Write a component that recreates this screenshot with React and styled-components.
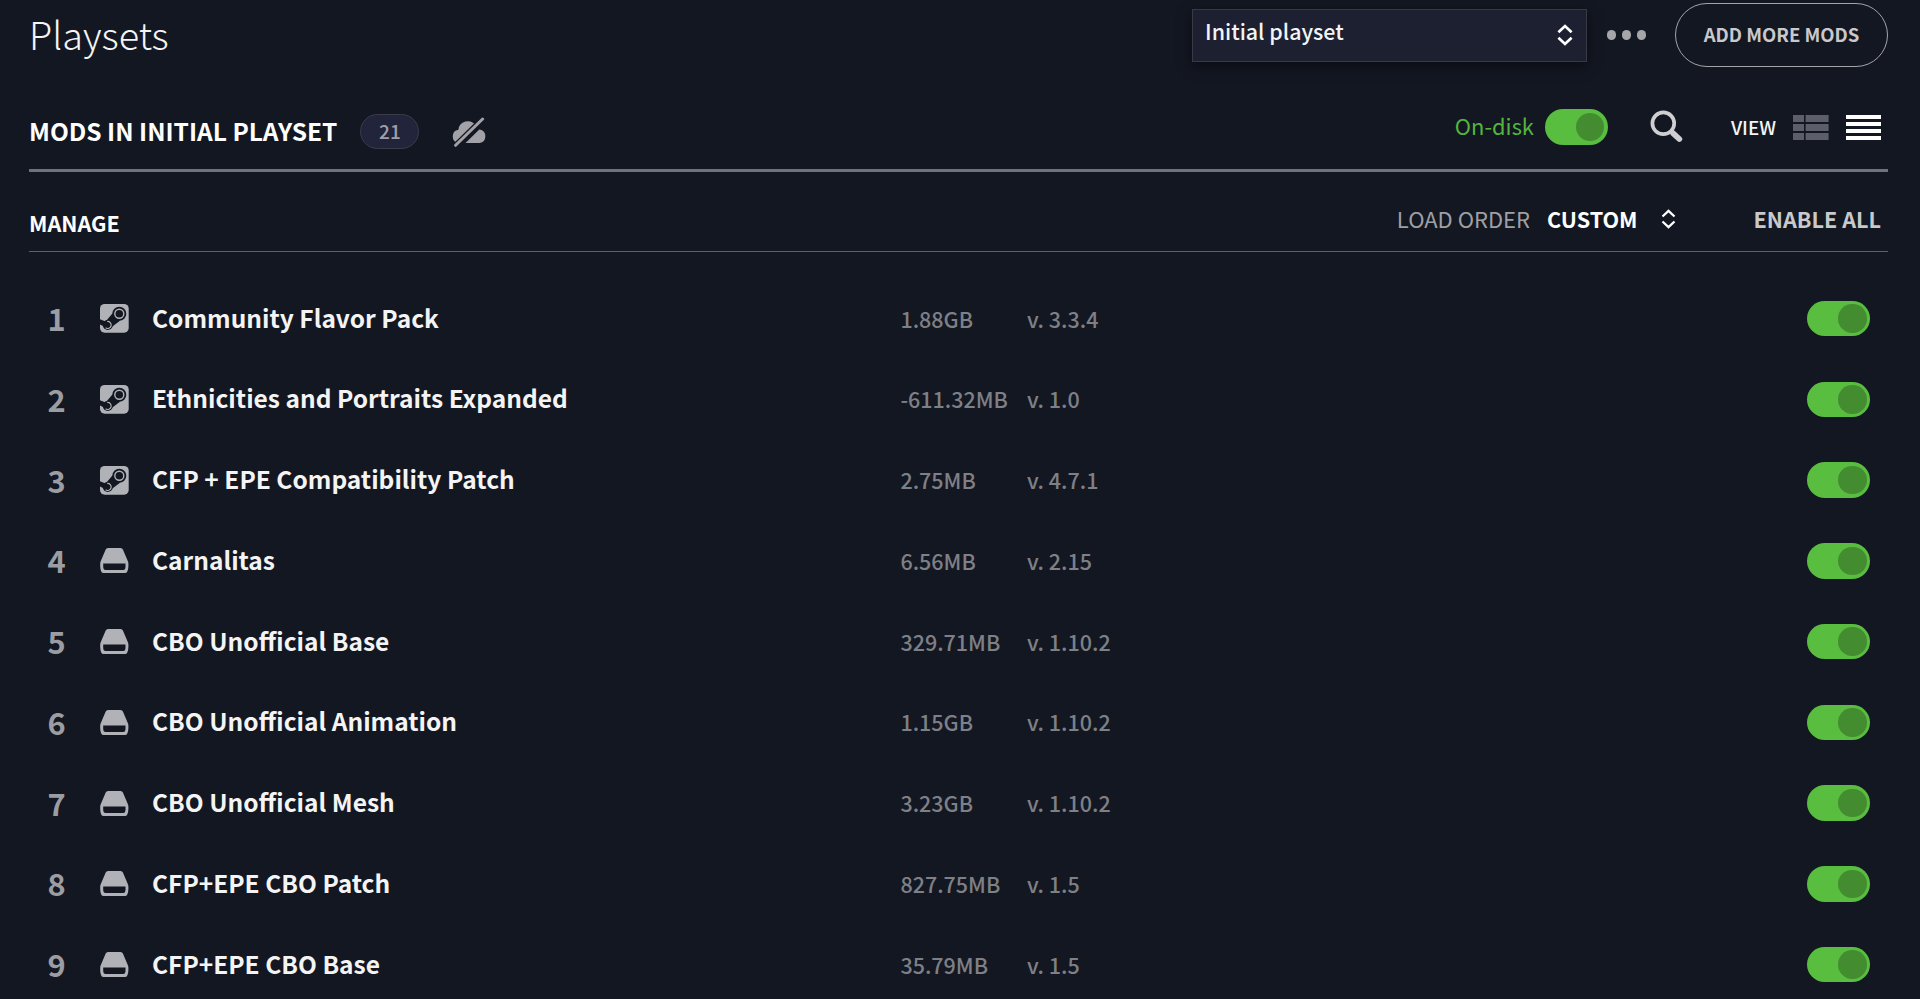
import React, { useState } from 'react'
import styled, { createGlobalStyle } from 'styled-components'

const GlobalStyle = createGlobalStyle`
  * {
    box-sizing: border-box;
  }

  body {
    margin: 0;
    background-color: #131722;
    font-family: "Noto Sans CJK SC", "Noto Sans", sans-serif;
    overflow: hidden;
  }

  button {
    font-family: inherit;
    background: none;
    border: 0;
    padding: 0;
    cursor: pointer;
  }
`

const Page = styled.main`
  display: flex;
  flex-direction: column;
  width: 100%;
  height: 999px;
  padding: 3px 32px 0 29px;
  overflow: hidden;
  white-space: nowrap;
`

const Header = styled.header`
  display: flex;
  align-items: center;
  justify-content: space-between;
  flex-shrink: 0;
  height: 64px;
`

const Title = styled.h1`
  margin: 0;
  padding-bottom: 3px;
  color: #f4f4f5;
  font-size: 37.9px;
  font-weight: 300;
  line-height: 56px;
`

const HeaderActions = styled.div`
  display: flex;
  align-items: center;
`

const PlaysetSelect = styled.button`
  display: flex;
  align-items: center;
  justify-content: space-between;
  width: 395px;
  height: 53px;
  padding: 0 13px 0 12px;
  background-color: #1d2031;
  border: 1px solid #363946;
  box-shadow: 0 4px 12px rgba(0, 0, 0, 0.5);
  color: #f4f4f5;
  font-size: 21.4px;
  font-weight: 500;
`

const SelectText = styled.span`
  padding-bottom: 9px;
`

const MoreBtn = styled.button`
  display: flex;
  gap: 5.4px;
  margin: 0 29px 0 20px;
`

const Dot = styled.span`
  width: 9.4px;
  height: 9.4px;
  border-radius: 50%;
  background-color: #a6a6aa;
`

const AddBtn = styled.button`
  width: 213px;
  height: 64px;
  padding-bottom: 3px;
  border: 1px solid #a3a4a9;
  border-radius: 32px;
  color: #c9c9cb;
  font-size: 18.55px;
  font-weight: 700;
`

const SubHeader = styled.section`
  display: flex;
  justify-content: space-between;
  flex-shrink: 0;
  height: 105px;
  padding-top: 30px;
  border-bottom: 3px solid #70727b;
`

const SubHeaderLeft = styled.div`
  display: flex;
  align-items: center;
  height: 69px;
`

const SubHeaderRight = styled.div`
  display: flex;
  align-items: center;
  height: 60px;
  padding-right: 7px;
`

const SectionTitle = styled.h2`
  margin: 0;
  padding-bottom: 2px;
  color: #fff;
  font-size: 24.5px;
  font-weight: 700;
`

const Badge = styled.span`
  display: flex;
  align-items: center;
  justify-content: center;
  width: 59px;
  height: 35px;
  margin: 0 32px 0 23px;
  padding-bottom: 2px;
  background-color: #21243a;
  border: 1px solid #3a3c49;
  border-radius: 18px;
  color: #9fa0a6;
  font-size: 19px;
  font-weight: 500;
`

const OnDisk = styled.span`
  margin-right: 11px;
  padding-bottom: 4px;
  color: #54b53d;
  font-size: 21.9px;
`

const Switch = styled.button`
  display: flex;
  align-items: center;
  justify-content: ${({ $on }) => ($on ? 'flex-end' : 'flex-start')};
  width: 63px;
  height: 35.5px;
  padding: 0 3.5px;
  border-radius: 18px;
  background-color: ${({ $on }) => ($on ? '#59bd40' : '#3a3c49')};
`

const Knob = styled.span`
  width: 28.5px;
  height: 28.5px;
  border-radius: 50%;
  background-color: rgba(42, 88, 30, 0.47);
`

const SearchBtn = styled.button`
  display: flex;
  margin: 0 48px 2px 42px;
`

const ViewText = styled.span`
  margin-right: 17px;
  padding-bottom: 2px;
  color: #f4f4f5;
  font-size: 18.8px;
  font-weight: 500;
`

const ViewBtn = styled.button`
  display: flex;
  margin-left: ${({ $gap }) => $gap || 0};
  color: ${({ $active }) => ($active ? '#fff' : '#5c5f68')};
`

const ManageBar = styled.section`
  display: flex;
  justify-content: space-between;
  flex-shrink: 0;
  height: 80px;
  padding-top: 16px;
  border-bottom: 1px solid #5f616a;
`

const ManageText = styled.span`
  color: #fff;
  font-size: 21.6px;
  font-weight: 700;
  line-height: 70px;
`

const ManageRight = styled.div`
  display: flex;
  align-items: center;
  height: 61px;
  padding-right: 7px;
`

const OrderText = styled.span`
  padding-bottom: 1px;
  color: #9fa0a4;
  font-size: 22px;
`

const OrderBtn = styled.button`
  display: flex;
  align-items: center;
  gap: 23px;
  margin: 0 78px 0 17px;
  color: #fff;
  font-size: 21.6px;
  font-weight: 700;
`

const EnableBtn = styled.button`
  color: #c9c9cb;
  font-size: 21.6px;
  font-weight: 700;
`

const ModList = styled.ul`
  flex-shrink: 0;
  margin: 0;
  padding: 26.3px 0 0;
  list-style: none;
`

const ModRow = styled.li`
  display: grid;
  grid-template-columns: 52px 52.5px 748.4px 126.5px 1fr auto;
  align-items: center;
  height: 80.75px;
  padding: 0 18px 0 18.5px;
`

const ModNumber = styled.span`
  padding-bottom: 2px;
  color: #9c9da3;
  font-size: 30.8px;
  font-weight: 700;
`

const ModIcon = styled.span`
  display: flex;
  color: #b1b2b8;
`

const ModName = styled.span`
  padding-bottom: 3px;
  color: #f4f4f5;
  font-size: 24.5px;
  font-weight: 700;
`

const ModInfo = styled.span`
  padding-bottom: 1px;
  color: #7e8086;
  font-size: 21.5px;
  font-weight: 500;
`

const mods = [
  { name: 'Community Flavor Pack', size: '1.88GB', version: '3.3.4', source: 'steam' },
  { name: 'Ethnicities and Portraits Expanded', size: '-611.32MB', version: '1.0', source: 'steam' },
  { name: 'CFP + EPE Compatibility Patch', size: '2.75MB', version: '4.7.1', source: 'steam' },
  { name: 'Carnalitas', size: '6.56MB', version: '2.15', source: 'local' },
  { name: 'CBO Unofficial Base', size: '329.71MB', version: '1.10.2', source: 'local' },
  { name: 'CBO Unofficial Animation', size: '1.15GB', version: '1.10.2', source: 'local' },
  { name: 'CBO Unofficial Mesh', size: '3.23GB', version: '1.10.2', source: 'local' },
  { name: 'CFP+EPE CBO Patch', size: '827.75MB', version: '1.5', source: 'local' },
  { name: 'CFP+EPE CBO Base', size: '35.79MB', version: '1.5', source: 'local' },
]

const SortIcon = ({ width, height, stroke }) => (
  <svg width={width} height={height} viewBox="0 0 16 22" fill="none" stroke="#fff" strokeWidth={stroke}>
    <path d="M1.4 8.2 L8 2 L14.6 8.2" />
    <path d="M1.4 13.8 L8 20 L14.6 13.8" />
  </svg>
)

const CloudOffIcon = () => (
  <svg width="36" height="30" viewBox="0 0 36 30">
    <mask id="cloud-cut">
      <rect width="36" height="30" fill="#fff" />
      <path d="M1 33.6 L37 -1.6" stroke="#000" strokeWidth="8" />
    </mask>
    <path
      d="M7.2 26 A6.7 6.7 0 0 1 7.4 12.8 A9.4 9.4 0 0 1 24.4 8.2 A6 6 0 0 1 28.6 12.4 A6.9 6.9 0 0 1 28.6 26 Z"
      fill="#a1a1a7"
      mask="url(#cloud-cut)"
    />
    <path d="M4.6 28.3 L31.6 2" stroke="#a1a1a7" strokeWidth="3" strokeLinecap="round" />
  </svg>
)

const SearchIcon = () => (
  <svg width="33" height="33" viewBox="0 0 33 33" fill="none" stroke="#cfcfd2">
    <circle cx="13.3" cy="13.3" r="10.9" strokeWidth="3.7" />
    <path d="M21 21.3 L23.5 23.5" strokeWidth="4.4" />
    <path d="M23.2 23.3 L29.3 29" strokeWidth="5.8" strokeLinecap="round" />
  </svg>
)

const GridIcon = () => (
  <svg width="36" height="25" viewBox="0 0 36 25" fill="currentColor">
    {[0, 9, 18].map((y) => (
      <g key={y}>
        <rect x="0" y={y} width="11" height="7" />
        <rect x="12.6" y={y} width="23" height="7" />
      </g>
    ))}
  </svg>
)

const ListIcon = () => (
  <svg width="35" height="25" viewBox="0 0 35 25" fill="currentColor">
    {[0, 7, 14, 21].map((y) => (
      <rect key={y} x="0" y={y} width="35" height="4" />
    ))}
  </svg>
)

const SteamIcon = () => (
  <svg width="29" height="29" viewBox="0 0 29 29">
    <rect width="28.7" height="28.7" rx="4.6" fill="currentColor" />
    <g fill="#131722">
      <path d="M0 15.2 L5.6 17.4 L12.4 9.6 L20 16.8 L12.4 22.6 L6 23.6 L0 20.6 Z" />
      <circle cx="19.3" cy="9.8" r="7" />
      <circle cx="7.8" cy="20.9" r="5" />
    </g>
    <circle cx="19.3" cy="9.8" r="4.5" fill="none" stroke="currentColor" strokeWidth="1.4" />
    <path d="M5.6 23.8 A3.5 3.5 0 1 0 7.2 17.5" fill="none" stroke="currentColor" strokeWidth="1.2" />
  </svg>
)

const DriveIcon = () => (
  <svg width="29" height="25" viewBox="0 0 29 25" fill="currentColor">
    <path
      fillRule="evenodd"
      d="M8 0 H20.6 Q22.2 0 22.9 1.5 L28 13.5 Q28.4 14.5 28.4 16 V18 Q28.4 21 27.3 23.4 Q26.6 25 25 25 H3.6 Q2 25 1.2 23.4 Q0.2 21 0.2 18 V16 Q0.2 14.5 0.6 13.5 L5.7 1.5 Q6.4 0 8 0 Z M3.2 15.5 V18.5 Q3.2 22 5.6 22 H23.2 Q25.5 22 25.5 18.5 V15.5 Z"
    />
  </svg>
)

const Toggle = () => {
  const [on, setOn] = useState(true)

  return (
    <Switch $on={on} onClick={() => setOn(!on)}>
      <Knob />
    </Switch>
  )
}

const App = () => {
  return (
    <>
      <GlobalStyle />
      <Page>
        <Header>
          <Title>Playsets</Title>
          <HeaderActions>
            <PlaysetSelect>
              <SelectText>Initial playset</SelectText>
              <SortIcon width="16" height="22" stroke="2.7" />
            </PlaysetSelect>
            <MoreBtn>
              <Dot />
              <Dot />
              <Dot />
            </MoreBtn>
            <AddBtn>ADD MORE MODS</AddBtn>
          </HeaderActions>
        </Header>

        <SubHeader>
          <SubHeaderLeft>
            <SectionTitle>MODS IN INITIAL PLAYSET</SectionTitle>
            <Badge>21</Badge>
            <CloudOffIcon />
          </SubHeaderLeft>
          <SubHeaderRight>
            <OnDisk>On-disk</OnDisk>
            <Toggle />
            <SearchBtn>
              <SearchIcon />
            </SearchBtn>
            <ViewText>VIEW</ViewText>
            <ViewBtn>
              <GridIcon />
            </ViewBtn>
            <ViewBtn $active $gap="17px">
              <ListIcon />
            </ViewBtn>
          </SubHeaderRight>
        </SubHeader>

        <ManageBar>
          <ManageText>MANAGE</ManageText>
          <ManageRight>
            <OrderText>LOAD ORDER</OrderText>
            <OrderBtn>
              CUSTOM
              <SortIcon width="15" height="20" stroke="2.5" />
            </OrderBtn>
            <EnableBtn>ENABLE ALL</EnableBtn>
          </ManageRight>
        </ManageBar>

        <ModList>
          {mods.map((mod, i) => (
            <ModRow key={mod.name}>
              <ModNumber>{i + 1}</ModNumber>
              <ModIcon>{mod.source === 'steam' ? <SteamIcon /> : <DriveIcon />}</ModIcon>
              <ModName>{mod.name}</ModName>
              <ModInfo>{mod.size}</ModInfo>
              <ModInfo>v. {mod.version}</ModInfo>
              <Toggle />
            </ModRow>
          ))}
        </ModList>
      </Page>
    </>
  )
}

export default App
